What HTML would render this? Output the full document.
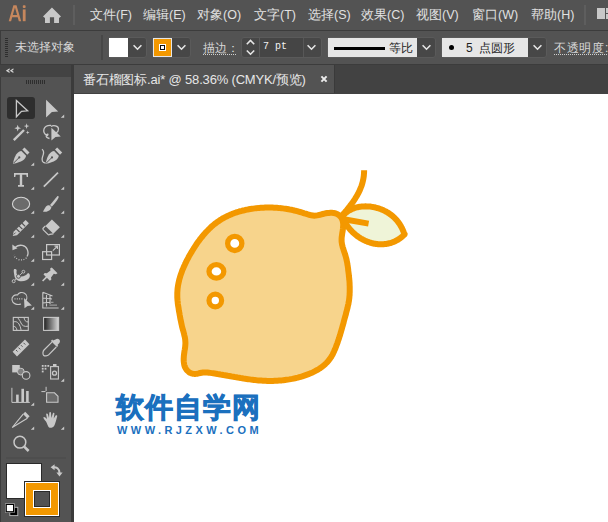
<!DOCTYPE html>
<html><head><meta charset="utf-8">
<style>
*{margin:0;padding:0;box-sizing:border-box}
html,body{width:608px;height:522px;overflow:hidden;background:#535353;font-family:"Liberation Sans",sans-serif;color:#dcdcdc}
.a{position:absolute}
.menu{position:absolute;top:6.5px;font-size:12.5px;color:#e1e1e1;letter-spacing:0px;white-space:nowrap;line-height:16px}
.dd{position:absolute;top:37px;height:21px;background:#474747;border:1px solid #5a5a5a;border-radius:3px}
.ctl{position:absolute;font-size:12px;color:#d8d8d8;white-space:nowrap;line-height:14px}
</style></head><body>
<!-- menu bar -->
<div class="a" style="left:0;top:30px;width:608px;height:1px;background:#3c3c3c"></div>
<svg class="a" style="left:0;top:0" width="70" height="30" viewBox="0 0 70 30">
<path fill-rule="evenodd" fill="#c6875d" d="M8.7,21.2 L13.4,5.2 L16.5,5.2 L21.2,21.2 L18.8,21.2 L17.7,17.3 L12.2,17.3 L11.1,21.2 Z M12.8,15.1 L17.1,15.1 L14.95,7.4 Z"/>
<rect x="22.8" y="9.4" width="2.8" height="11.8" fill="#c6875d"/>
<rect x="22.8" y="5.3" width="2.8" height="2.8" rx="0.8" fill="#c6875d"/>
<path fill="#c8c8c8" d="M51.95,7.6 L61,16.4 L59,18 L59,22.9 L54.1,22.9 L54.1,17.2 L49.9,17.2 L49.9,22.9 L45,22.9 L45,18 L43,16.4 Z"/>
</svg>
<div class="a" style="left:73px;top:5px;width:2px;height:20px;background:#5e5e5e"></div>
<div class="menu" style="left:90px">文件(F)</div>
<div class="menu" style="left:143px">编辑(E)</div>
<div class="menu" style="left:197px">对象(O)</div>
<div class="menu" style="left:254px">文字(T)</div>
<div class="menu" style="left:308px">选择(S)</div>
<div class="menu" style="left:361px">效果(C)</div>
<div class="menu" style="left:416px">视图(V)</div>
<div class="menu" style="left:472px">窗口(W)</div>
<div class="menu" style="left:531px">帮助(H)</div>
<div class="a" style="left:584px;top:5px;width:2px;height:20px;background:#5e5e5e"></div>
<div class="a" style="left:597px;top:8px;width:8px;height:11px;background:#c8c8c8"></div>
<div class="a" style="left:606px;top:8px;width:3px;height:5px;background:#c8c8c8"></div>
<div class="a" style="left:606px;top:14px;width:3px;height:5px;background:#c8c8c8"></div>

<!-- control bar -->
<div class="a" style="left:0;top:31px;width:1px;height:33px;background:#3c3c3c"></div>
<div class="a" style="left:0;top:64px;width:608px;height:1px;background:#3c3c3c"></div>
<div class="a" style="left:5px;top:38px;width:3px;height:20px;background:repeating-linear-gradient(#2e2e2e 0 1px,transparent 1px 2px)"></div>
<div class="ctl" style="left:15px;top:40px">未选择对象</div>
<div class="a" style="left:101px;top:35px;width:2px;height:25px;background:#474747"></div>
<div class="dd" style="left:108px;width:39px"></div>
<div class="a" style="left:109px;top:38px;width:19px;height:19px;background:#fff"></div>
<div class="dd" style="left:152px;width:39px"></div>
<div class="a" style="left:153px;top:38px;width:19px;height:19px;background:#f39800;border:1px solid #e6e6e6"></div>
<div class="a" style="left:159px;top:44px;width:7px;height:7px;background:#fff;border:1px solid #fff"></div>
<div class="a" style="left:160px;top:45px;width:5px;height:5px;background:#fff;border:1px solid #111"></div>
<div class="ctl" style="left:203px;top:41px">描边：</div>
<div class="a" style="left:203px;top:54px;width:33px;height:1px;background:repeating-linear-gradient(90deg,#cfcfcf 0 1px,transparent 1px 2px)"></div>
<div class="dd" style="left:241px;width:81px"></div>
<div class="a" style="left:259px;top:38px;width:1px;height:19px;background:#5c5c5c"></div>
<div class="a" style="left:260px;top:38px;width:43px;height:19px;background:#454545"></div>
<div class="a" style="left:303px;top:38px;width:1px;height:19px;background:#575757"></div>
<div class="ctl" style="left:263px;top:40px;font-family:'Liberation Mono',monospace;font-size:10px;color:#f2f2f2">7 pt</div>
<div class="dd" style="left:327px;width:109px"></div>
<div class="a" style="left:328px;top:38px;width:89px;height:19px;background:#e6e6e6"></div>
<div class="a" style="left:334px;top:47px;width:51px;height:3px;background:#000"></div>
<div class="ctl" style="left:389px;top:41px;color:#1e1e1e">等比</div>
<div class="dd" style="left:441px;width:106px"></div>
<div class="a" style="left:442px;top:38px;width:86px;height:19px;background:#e6e6e6"></div>
<div class="a" style="left:449px;top:45px;width:5px;height:5px;border-radius:50%;background:#000"></div>
<div class="ctl" style="left:466px;top:41px;color:#1e1e1e">5&nbsp; 点圆形</div>
<svg class="a" style="left:0;top:31px" width="608" height="33" viewBox="0 31 608 33">
<g fill="none" stroke="#e6e6e6" stroke-width="1.6">
<path d="M133.6,45.3 L137.5,49.2 L141.4,45.3"/>
<path d="M177.6,45.3 L181.5,49.2 L185.4,45.3"/>
<path d="M307.6,45.3 L311.5,49.2 L315.4,45.3"/>
<path d="M422.6,45.3 L426.5,49.2 L430.4,45.3"/>
<path d="M533.6,45.3 L537.5,49.2 L541.4,45.3"/>
<path d="M246.8,44.2 L250.5,40.5 L254.2,44.2"/>
<path d="M246.8,50.5 L250.5,54.2 L254.2,50.5"/>
</g>
</svg>
<div class="ctl" style="left:554px;top:41px;letter-spacing:0.7px">不透明度</div><div class="ctl" style="left:605px;top:41px">:</div>
<div class="a" style="left:554px;top:54px;width:54px;height:1px;background:repeating-linear-gradient(90deg,#cfcfcf 0 1px,transparent 1px 2px)"></div>

<!-- tab bar -->
<div class="a" style="left:0;top:65px;width:72px;height:12px;background:#434343"></div>
<svg class="a" style="left:0;top:65px" width="20" height="12" viewBox="0 65 20 12"><path d="M5.8,70.7 L9.6,68.3 L9.6,69.9 L8,70.7 L9.6,71.5 L9.6,73.1 Z M9.8,70.7 L13.4,68.3 L13.4,69.9 L11.8,70.7 L13.4,71.5 L13.4,73.1 Z" fill="#d4d4d4"/></svg>
<div class="a" style="left:72px;top:65px;width:536px;height:29px;background:#424242"></div>
<div class="a" style="left:74px;top:65px;width:260px;height:28px;background:#535353"></div>
<div class="ctl" style="left:83px;top:73px;font-size:13px;color:#e6e6e6;letter-spacing:-0.18px">番石榴图标.ai* @ 58.36% (CMYK/预览)</div>
<div class="a" style="left:334px;top:65px;width:1px;height:28px;background:#3a3a3a"></div>
<svg class="a" style="left:318px;top:73px" width="12" height="12" viewBox="0 0 12 12"><path d="M3.4,3.4 L8.6,8.6 M8.6,3.4 L3.4,8.6" stroke="#ececec" stroke-width="2"/></svg>

<!-- toolbar -->
<div class="a" style="left:0;top:77px;width:1px;height:445px;background:#3c3c3c"></div>
<div class="a" style="left:26px;top:80px;width:19px;height:4px;background:repeating-linear-gradient(90deg,#2e2e2e 0 1px,transparent 1px 2px)"></div>
<div class="a" style="left:71px;top:65px;width:3px;height:457px;background:#3b3b3b"></div>

<svg class="a" style="left:0;top:77px" width="71" height="445" viewBox="0 77 71 445">
<rect x="7" y="97" width="28" height="22" rx="3" fill="#2e2e2e"/>
<g fill="#c8c8c8" stroke="none">
<path d="M30.800000000000004,165.8 L34.2,165.8 L34.2,162.4 Z"/><path d="M30.800000000000004,189.8 L34.2,189.8 L34.2,186.4 Z"/><path d="M30.800000000000004,213.8 L34.2,213.8 L34.2,210.4 Z"/><path d="M30.800000000000004,237.8 L34.2,237.8 L34.2,234.4 Z"/><path d="M30.800000000000004,261.8 L34.2,261.8 L34.2,258.40000000000003 Z"/><path d="M30.800000000000004,285.8 L34.2,285.8 L34.2,282.40000000000003 Z"/><path d="M30.800000000000004,309.8 L34.2,309.8 L34.2,306.40000000000003 Z"/><path d="M30.800000000000004,429.8 L34.2,429.8 L34.2,426.40000000000003 Z"/><path d="M30.800000000000004,405.8 L34.2,405.8 L34.2,402.40000000000003 Z"/><path d="M60.800000000000004,117.8 L64.2,117.8 L64.2,114.39999999999999 Z"/><path d="M60.800000000000004,189.8 L64.2,189.8 L64.2,186.4 Z"/><path d="M60.800000000000004,213.8 L64.2,213.8 L64.2,210.4 Z"/><path d="M60.800000000000004,237.8 L64.2,237.8 L64.2,234.4 Z"/><path d="M60.800000000000004,261.8 L64.2,261.8 L64.2,258.40000000000003 Z"/><path d="M60.800000000000004,285.8 L64.2,285.8 L64.2,282.40000000000003 Z"/><path d="M60.800000000000004,309.8 L64.2,309.8 L64.2,306.40000000000003 Z"/><path d="M60.800000000000004,381.8 L64.2,381.8 L64.2,378.40000000000003 Z"/><path d="M60.800000000000004,429.8 L64.2,429.8 L64.2,426.40000000000003 Z"/>
<!-- direct selection -->
<path d="M46.1,99.8 L58.2,111.4 L51.9,111.9 L46.1,117.4 Z"/>
<!-- wand stars -->
<path d="M17.7,124.8 L18.6,127.3 L21.1,128.2 L18.6,129.1 L17.7,131.6 L16.8,129.1 L14.3,128.2 L16.8,127.3 Z"/>
<path d="M26.6,123.3 L27.3,125.4 L29.4,126.1 L27.3,126.8 L26.6,128.9 L25.9,126.8 L23.8,126.1 L25.9,125.4 Z"/>
<path d="M27.7,130.5 L28.2,131.9 L29.6,132.4 L28.2,132.9 L27.7,134.3 L27.2,132.9 L25.8,132.4 L27.2,131.9 Z"/>
<!-- lasso arrow -->
<path d="M51.4,127.7 L60.8,136.6 L55.5,137 L51.4,140.6 Z"/>
<!-- pen nibs -->
<path d="M21.4,151 L26.1,155.7 C25.5,159.5 22,162 12.9,163.8 C14.7,154.7 17.5,151.6 21.4,151 Z"/>
<path d="M22.3,149.6 L24.5,147.5 L29.5,152.5 L27.3,154.7 Z"/>
<path d="M54.1,151 L58.8,155.7 C58.2,159.5 54.7,162 45.6,163.8 C47.4,154.7 50.2,151.6 54.1,151 Z"/>
<path d="M55,149.6 L57.2,147.5 L62.2,152.5 L60,154.7 Z"/>
<!-- T -->
<path d="M14,173 L28,173 L28,177 L26.7,177 L26.3,174.8 L22.2,174.8 L22.2,185 L24,185 L24,186.8 L18,186.8 L18,185 L19.8,185 L19.8,174.8 L15.7,174.8 L15.3,177 L14,177 Z"/>
<!-- brush -->
<path d="M58.2,196 C59.5,197 58.5,199 51.8,206.8 L50,205 C56.5,197.8 57,195.5 58.2,196 Z"/>
<path d="M49.6,205.4 L51.4,207.2 C50.5,211 47,212 43,211.8 C44,210 44.8,208 46,206.6 C47,205.5 48.3,205 49.6,205.4 Z"/>
<!-- pencil striped -->
<path d="M25.6,220 L28.9,223.3 L17,235.2 L12.8,236 L13.6,231.8 Z"/>
<!-- eraser -->
<path d="M51.9,219.4 L59.9,227.2 L53.3,233.8 L45.4,225.9 Z"/>
<!-- rotate arrow head -->
<path d="M12.3,244.5 L17.5,248.3 L12.5,250.2 Z"/>
<!-- pin -->
<path d="M51.8,267.5 L57.5,273.2 L55.8,274.2 L53.8,273.8 L51,277.5 L51.4,279.6 L49.9,280.8 L43.5,274.4 L44.7,272.9 L46.8,273.3 L50.5,270.5 L50.1,268.5 Z"/>
<!-- warp figure -->
<path d="M14,269.3 C15.8,268.2 17.3,269.8 16.5,271.8 C16,273.8 17.5,276 20.2,276.5 C23.2,277 26.2,275.5 28,273 C29.7,273.3 30.3,275 29.6,277.2 C28.2,280.2 24,281.6 20.2,281.2 C17,280.8 14.6,278.3 14.3,275.2 C14.1,273.2 13.3,271 14,269.3 Z"/>
<!-- shape builder arrow -->
<path d="M24,298.1 L31.9,305.6 L27.5,306 L24.5,308.3 Z"/>
<!-- ruler -->
<path d="M12.6,351.8 L25,339.6 L29.4,344.2 L17,356.4 Z"/>
<!-- eyedropper bulb -->
<path d="M55.5,339.6 C56.5,338.6 58.3,338.6 59.2,339.6 C60.2,340.6 60.2,342.2 59.2,343.2 L57.5,344.9 L58.3,345.8 L57,347 L50.9,340.9 L52.2,339.6 L53,340.4 Z"/>
<!-- blend -->
<rect x="12.2" y="365" width="7.6" height="7.4"/>
<!-- graph bars -->
<rect x="16.1" y="394.6" width="2.6" height="7.4"/>
<rect x="21.4" y="388.8" width="2.6" height="13.2"/>
<rect x="26.1" y="391" width="2.6" height="11"/>
<!-- symbol spray dots -->
<rect x="41.8" y="365" width="1.8" height="1.8"/><rect x="44.6" y="365" width="1.8" height="1.8"/><rect x="47.4" y="365" width="1.8" height="1.8"/>
<rect x="41.8" y="367.8" width="1.8" height="1.8"/><rect x="44.6" y="367.8" width="1.8" height="1.8"/>
<rect x="41.8" y="370.6" width="1.8" height="1.8"/>
<rect x="53" y="364" width="3.5" height="2"/>
<!-- slice cap -->
<path d="M25.2,411.8 L29.6,416.2 L27.4,418.4 L23,414 Z"/>
<!-- hand -->
<path d="M46,421.5 C44.5,419.5 43,418 43.5,417.2 C44.2,416.5 45.5,417.5 47,419 L46.2,414.5 C46,413.5 47.5,413.2 47.9,414.3 L49,418 L49.3,412.7 C49.4,411.7 51,411.7 51,412.7 L51.4,418 L52.8,413.4 C53.1,412.4 54.6,412.8 54.4,413.8 L53.7,418.5 L55.6,415.6 C56.1,414.8 57.6,415.3 57.2,416.3 C56.5,419 55.5,423 54.5,425.2 C53.5,427.3 51.5,428 49.8,427.8 C48,427.5 47,423 46,421.5 Z"/>
</g>
<g fill="none" stroke="#c8c8c8" stroke-width="1.3">
<!-- selection outline -->
<path d="M16.4,100.5 L27.6,110.8 L21.5,111.3 L16.4,116.8 Z" stroke-linejoin="miter"/>
<!-- wand stick -->
<path d="M13.8,140.2 L24,130" stroke-width="2.4"/>
<!-- lasso loop -->
<path d="M51,126.5 C53,125 58.5,125.5 58.5,129 C58.5,131.5 57,132.5 56,133 M49.5,138.5 C47,138 45.5,137 46.5,135 C47.5,133.5 48.5,134 47.5,135.5 C44,135 43.3,131 44,129 C45,126.5 48,125.3 51,125.5"/>
<path d="M13.5,163.2 L19,157.7 M46.2,163.2 L51.7,157.7" stroke="#535353" stroke-width="1"/><circle cx="19.3" cy="157.4" r="1.1" fill="#535353" stroke="none"/><circle cx="52" cy="157.4" r="1.1" fill="#535353" stroke="none"/>
<!-- squiggle -->
<path d="M42,149.3 C44.5,151 43.8,154 42.5,157 C41.3,160.5 42.5,163 45.5,163"/>
<!-- line tool -->
<path d="M43.8,186.6 L58,172.6" stroke-width="1.7"/>
<!-- ellipse -->
<ellipse cx="21.05" cy="203.9" rx="8.6" ry="6.6" fill="#6b6b6b" stroke="#d4d4d4" stroke-width="1.1"/>
<path d="M16.2,228.6 L19.6,232 M19,225.8 L22.4,229.2 M21.8,223 L25.2,226.4" stroke="#535353" stroke-width="1.2"/><path d="M13.6,234.6 L15.6,232.6" stroke="#535353" stroke-width="0.9"/>
<!-- eraser bottom -->
<path d="M45.4,225.9 L43.3,228 C42.8,228.5 42.8,229.3 43.3,229.8 L47.9,234.4 C48.4,234.9 49.2,234.9 49.7,234.4 L53.3,233.8" stroke-width="1.2"/>
<!-- rotate arc -->
<path d="M15.5,247 C19.5,244 25.5,245 27.3,249.5 C28.5,252.5 28,255 27,256.5"/>
<path d="M26.5,257.8 C24,260 21,260.3 18.5,259.5 C16,258.5 14.5,257 13.8,255" stroke-dasharray="0.9 1.6"/>
<!-- scale squares -->
<rect x="42.6" y="251.7" width="9" height="7.8" stroke-width="1.2"/>
<rect x="46.6" y="244.6" width="12.8" height="10.4" stroke-width="1.2"/>
<path d="M52.9,250.6 L57.2,246.3 M54.5,246.2 L57.4,246.2 L57.4,249.1" stroke-width="1.2"/>
<!-- pin needle -->
<path d="M47,276.6 L42.6,281" stroke-width="1.6"/>
<!-- warp circles -->
<path d="M14.5,280.3 L22.6,272.5" stroke="#c8c8c8" stroke-width="0.9"/><circle cx="13.7" cy="281.2" r="1.5" fill="#535353" stroke-width="0.9"/><circle cx="23.4" cy="271.7" r="1.4" fill="#535353" stroke-width="0.9"/><circle cx="18.5" cy="276.3" r="2" fill="#c8c8c8" stroke="#535353" stroke-width="0.9"/>
<!-- shape builder circles -->
<path d="M21,304 C17,305.5 12.5,303.5 12,300 C11.5,296.5 14.5,294.5 17.5,295 C18.5,292.5 22,291.8 24.5,293.2 C27,294.8 27.5,298 26,300.5" stroke-width="1.1"/>
<path d="M14.5,298.8 L23.5,298.8" stroke-dasharray="1 1.3" stroke-width="1.3"/>
<!-- perspective grid -->
<path d="M42.8,292.2 L42.8,308 L58.6,308 M42.8,292.2 L52.5,296 M42.8,292.2 L42.8,308 M46.5,293.6 L46.5,306.5 M50,295 L50,304 M42.8,298 L52,299 M42.8,303 L50,302.3" stroke-width="1.1"/>
<path d="M49.5,305.2 L57,305.2 M50.5,302.4 L53.5,302.4" stroke="#9a9a9a" stroke-width="1.2"/>
<!-- mesh -->
<rect x="13.3" y="317.4" width="15" height="13" stroke-width="1.1"/>
<path d="M13.3,322 C16,321 18,322 19.5,325 C20.5,327 21,329 21,330.4 M17.5,317.4 C19,319.5 20.5,321.5 21,323 C22,325.5 24,327 28.3,326.2 M24,317.4 C24.5,320 25.2,322 28.3,322 M13.3,326.5 C15.5,326 16.5,328 17,330.4" stroke-width="1"/>
<!-- gradient -->
<rect x="43.6" y="317.4" width="15" height="13" fill="url(#grad)" stroke-width="1.1"/>
<!-- ruler ticks -->
<path d="M16,350 L17.5,351.5 M18.5,347.6 L20.3,349.4 M21,345.2 L22.5,346.7 M23.5,342.8 L25.3,344.6" stroke="#535353" stroke-width="1"/>
<!-- eyedropper tube -->
<path d="M51.9,342.1 L44,350 C42.8,351.3 42.6,354 43.5,355.2 C44.7,356.3 47.4,356 48.6,354.8 L56.3,347" stroke-width="1.2"/>
<!-- blend circles -->
<circle cx="20.8" cy="371.6" r="3.4" fill="#808080" stroke="#c8c8c8" stroke-width="1"/>
<circle cx="26.1" cy="375.4" r="3.8" fill="#535353" stroke-width="1.1"/>
<!-- symbol can -->
<rect x="50.6" y="366.6" width="7.8" height="12.4" stroke-width="1.1"/>
<circle cx="54.5" cy="373.2" r="2" stroke-width="1.3"/>
<!-- graph axis -->
<path d="M11.9,387.8 L11.9,402.4 L29.8,402.4" stroke-width="1"/>
<!-- artboard -->
<path d="M46.1,386.8 L46.1,391 M41.4,391.6 L45.5,391.6" stroke-width="1"/>
<path d="M46.6,392.8 L54.5,392.8 L58,396.3 L58,402.2 L46.6,402.2 Z" fill="#6b6b6b" stroke-width="1.1"/>
<!-- slice blade -->
<path d="M23.2,414.2 L12.2,427.5 L27.4,418.2" stroke-width="1.1"/>
<!-- zoom -->
<circle cx="19.9" cy="442.2" r="5.9" stroke-width="1.5"/>
<path d="M24.2,446.6 L28.6,451" stroke-width="2.6"/>
<!-- swap arrows -->
<path d="M53,467.2 C56.5,466.8 59.3,468.5 59.5,473" stroke-width="2"/>
</g>
<path d="M50.6,467.2 L54.6,464.2 L54.6,470.2 Z M59.5,476.6 L56.4,472.4 L62.6,472.4 Z" fill="#c8c8c8"/>
<defs><linearGradient id="grad" x1="0" x2="1"><stop offset="0" stop-color="#1e1e1e"/><stop offset="1" stop-color="#d8d8d8"/></linearGradient></defs>
<!-- separator -->
<rect x="6" y="457.5" width="60" height="1" fill="#4b4b4b"/>
<!-- fill swatch -->
<rect x="6.5" y="463.5" width="35" height="35" fill="#fff" stroke="#2a2a2a" stroke-width="1"/>
<!-- stroke swatch -->
<rect x="24.5" y="481.5" width="35" height="35" fill="#f39800" stroke="#2a2a2a" stroke-width="1"/>
<rect x="25.5" y="482.5" width="33" height="33" fill="none" stroke="#fff" stroke-width="1"/>
<rect x="33" y="490" width="18" height="18" fill="#fff"/>
<rect x="34.5" y="491.5" width="15" height="15" fill="#525252" stroke="#2a2a2a" stroke-width="1"/>
<!-- default fill/stroke -->
<rect x="9.8" y="507.3" width="8" height="8.3" fill="#000" stroke="#b8b8b8" stroke-width="0.9"/>
<rect x="5.4" y="503.6" width="9" height="9" fill="none" stroke="#9a9a9a" stroke-width="0.8"/>
<rect x="6.3" y="504.5" width="7.2" height="7.2" fill="#fff" stroke="#000" stroke-width="1"/>
</svg>
<!-- canvas -->
<div class="a" style="left:74px;top:94px;width:534px;height:428px;background:#fff"></div>
<svg class="a" style="left:0;top:0" width="608" height="522" viewBox="0 0 608 522">
<g fill="none" stroke="#f39800" stroke-width="6" stroke-linejoin="round">
<path id="body" d="M259.2,207.9 L260.7,207.8 L262.2,207.7 L263.7,207.7 L265.1,207.6 L266.6,207.6 L268.1,207.6 L269.6,207.6 L271.0,207.6 L272.5,207.6 L274.0,207.7 L275.4,207.7 L276.9,207.8 L278.4,207.9 L279.8,208.1 L281.3,208.2 L282.8,208.4 L284.2,208.6 L285.7,208.8 L287.1,209.0 L288.6,209.3 L290.0,209.6 L291.5,209.8 L292.9,210.1 L294.4,210.5 L295.8,210.8 L297.2,211.2 L298.6,211.6 L300.1,212.0 L301.5,212.4 L302.9,212.8 L304.3,213.3 L305.7,213.7 L307.2,214.2 L308.6,214.6 L310.0,215.0 L311.5,215.3 L312.9,215.6 L314.3,215.7 L315.7,215.6 L317.1,215.4 L318.5,215.1 L319.9,214.8 L321.4,214.4 L322.8,214.0 L324.3,213.6 L325.8,213.3 L327.4,213.0 L328.9,212.9 L330.4,212.8 L331.9,212.8 L333.4,212.9 L334.8,213.2 L336.2,213.6 L337.5,214.2 L338.7,215.0 L339.8,215.9 L340.8,217.0 L341.6,218.3 L342.3,219.6 L342.7,220.9 L343.0,222.3 L343.2,223.8 L343.2,225.3 L343.1,226.8 L343.0,228.3 L342.8,229.8 L342.6,231.3 L342.3,232.8 L342.1,234.3 L341.9,235.8 L341.7,237.2 L341.6,238.6 L341.6,240.1 L341.6,241.5 L341.8,242.9 L342.0,244.4 L342.4,245.8 L342.7,247.2 L343.2,248.6 L343.6,250.1 L344.1,251.5 L344.6,252.9 L345.0,254.3 L345.5,255.8 L345.9,257.2 L346.3,258.6 L346.6,260.0 L346.9,261.5 L347.2,262.9 L347.4,264.4 L347.7,265.8 L347.9,267.3 L348.1,268.7 L348.2,270.2 L348.4,271.6 L348.6,273.1 L348.8,274.6 L348.9,276.0 L349.1,277.5 L349.2,279.0 L349.4,280.5 L349.5,281.9 L349.6,283.4 L349.6,284.9 L349.7,286.4 L349.7,287.8 L349.7,289.3 L349.7,290.8 L349.7,292.3 L349.6,293.7 L349.6,295.2 L349.4,296.7 L349.3,298.2 L349.1,299.6 L348.9,301.1 L348.6,302.5 L348.4,304.0 L348.0,305.4 L347.7,306.9 L347.4,308.3 L347.0,309.8 L346.6,311.2 L346.2,312.6 L345.9,314.1 L345.5,315.5 L345.1,316.9 L344.7,318.3 L344.3,319.8 L343.9,321.2 L343.6,322.6 L343.2,324.0 L342.8,325.4 L342.4,326.8 L342.0,328.2 L341.6,329.6 L341.2,331.0 L340.8,332.4 L340.4,333.8 L340.0,335.2 L339.5,336.6 L339.1,338.0 L338.6,339.4 L338.1,340.8 L337.7,342.2 L337.2,343.6 L336.6,345.0 L336.1,346.4 L335.6,347.8 L335.0,349.3 L334.4,350.6 L333.8,352.0 L333.1,353.4 L332.5,354.7 L331.7,356.0 L331.0,357.3 L330.1,358.5 L329.3,359.7 L328.4,360.8 L327.4,361.9 L326.4,363.0 L325.4,364.0 L324.3,365.0 L323.2,365.9 L322.0,366.8 L320.9,367.6 L319.7,368.5 L318.4,369.3 L317.2,370.0 L315.9,370.7 L314.6,371.4 L313.2,372.1 L311.9,372.7 L310.5,373.3 L309.2,373.9 L307.8,374.4 L306.4,374.9 L305.0,375.4 L303.6,375.9 L302.2,376.4 L300.7,376.8 L299.3,377.2 L297.9,377.6 L296.5,377.9 L295.0,378.3 L293.6,378.6 L292.1,378.9 L290.7,379.1 L289.2,379.4 L287.8,379.6 L286.3,379.8 L284.9,380.0 L283.4,380.2 L281.9,380.4 L280.5,380.5 L279.0,380.6 L277.5,380.7 L276.1,380.8 L274.6,380.8 L273.1,380.9 L271.6,380.9 L270.2,380.9 L268.7,380.9 L267.2,380.9 L265.7,380.8 L264.3,380.8 L262.8,380.7 L261.3,380.6 L259.8,380.5 L258.4,380.4 L256.9,380.3 L255.4,380.1 L254.0,380.0 L252.5,379.8 L251.0,379.6 L249.6,379.4 L248.1,379.2 L246.6,379.0 L245.2,378.8 L243.7,378.6 L242.3,378.3 L240.8,378.1 L239.4,377.8 L237.9,377.6 L236.5,377.3 L235.0,377.1 L233.6,376.8 L232.1,376.6 L230.6,376.3 L229.2,376.0 L227.7,375.8 L226.3,375.5 L224.8,375.2 L223.4,375.0 L221.9,374.7 L220.5,374.5 L219.0,374.2 L217.6,374.0 L216.1,373.7 L214.7,373.5 L213.2,373.3 L211.8,373.1 L210.3,372.9 L208.9,372.7 L207.4,372.5 L206.0,372.4 L204.5,372.4 L203.0,372.5 L201.6,372.7 L200.1,373.0 L198.6,373.4 L197.1,373.7 L195.6,373.9 L194.2,373.9 L192.7,373.7 L191.3,373.3 L189.9,372.7 L188.7,371.9 L187.6,370.9 L186.6,369.9 L185.8,368.7 L185.1,367.4 L184.6,366.1 L184.2,364.7 L184.0,363.3 L183.8,361.8 L183.7,360.2 L183.7,358.7 L183.8,357.1 L183.9,355.5 L184.1,354.0 L184.3,352.5 L184.5,351.0 L184.8,349.5 L185.0,348.1 L185.2,346.6 L185.3,345.2 L185.4,343.8 L185.4,342.4 L185.3,341.0 L185.2,339.6 L185.0,338.1 L184.7,336.7 L184.3,335.2 L184.0,333.7 L183.6,332.3 L183.2,330.8 L182.8,329.4 L182.4,327.9 L182.0,326.5 L181.7,325.0 L181.4,323.6 L181.1,322.2 L180.8,320.7 L180.5,319.3 L180.2,317.9 L180.0,316.5 L179.7,315.0 L179.5,313.6 L179.2,312.1 L178.9,310.7 L178.7,309.2 L178.5,307.7 L178.2,306.2 L178.0,304.8 L177.8,303.3 L177.7,301.8 L177.5,300.3 L177.4,298.8 L177.3,297.3 L177.3,295.8 L177.3,294.4 L177.3,292.9 L177.4,291.4 L177.5,290.0 L177.6,288.5 L177.8,287.1 L178.0,285.6 L178.3,284.2 L178.6,282.7 L178.9,281.3 L179.2,279.9 L179.6,278.5 L180.0,277.1 L180.4,275.7 L180.9,274.3 L181.4,272.9 L181.9,271.5 L182.4,270.1 L183.0,268.8 L183.6,267.4 L184.2,266.0 L184.8,264.7 L185.4,263.3 L186.1,262.0 L186.7,260.7 L187.4,259.4 L188.1,258.1 L188.8,256.7 L189.5,255.4 L190.3,254.2 L191.0,252.9 L191.8,251.6 L192.5,250.3 L193.3,249.1 L194.1,247.8 L194.9,246.6 L195.7,245.4 L196.5,244.1 L197.3,242.9 L198.2,241.7 L199.1,240.6 L199.9,239.4 L200.8,238.2 L201.8,237.1 L202.7,235.9 L203.6,234.8 L204.6,233.7 L205.6,232.6 L206.6,231.5 L207.6,230.5 L208.6,229.4 L209.7,228.4 L210.8,227.3 L211.9,226.3 L213.0,225.4 L214.1,224.4 L215.3,223.5 L216.5,222.6 L217.7,221.7 L218.9,220.9 L220.1,220.1 L221.4,219.3 L222.6,218.5 L223.9,217.8 L225.2,217.1 L226.5,216.5 L227.8,215.8 L229.2,215.2 L230.5,214.6 L231.9,214.1 L233.3,213.5 L234.6,213.0 L236.0,212.5 L237.4,212.1 L238.8,211.7 L240.3,211.2 L241.7,210.9 L243.1,210.5 L244.6,210.2 L246.0,209.8 L247.5,209.6 L248.9,209.3 L250.4,209.0 L251.9,208.8 L253.3,208.6 L254.8,208.4 L256.3,208.2 L257.8,208.1 L259.2,207.9Z" fill="#f7d48c"/>
<path id="leaf" d="M342.2,216.8 L342.8,216.0 L343.5,215.2 L344.1,214.5 L344.8,213.8 L345.6,213.1 L346.3,212.5 L347.1,211.9 L347.9,211.3 L348.7,210.8 L349.5,210.3 L350.4,209.9 L351.2,209.4 L352.1,209.0 L353.0,208.6 L353.9,208.3 L354.8,208.0 L355.7,207.7 L356.7,207.4 L357.6,207.2 L358.6,207.0 L359.6,206.8 L360.6,206.7 L361.5,206.6 L362.5,206.5 L363.5,206.4 L364.5,206.4 L365.5,206.3 L366.5,206.4 L367.5,206.4 L368.5,206.5 L369.6,206.5 L370.6,206.6 L371.6,206.8 L372.6,206.9 L373.5,207.1 L374.5,207.3 L375.5,207.5 L376.5,207.8 L377.4,208.1 L378.4,208.3 L379.4,208.7 L380.3,209.0 L381.2,209.3 L382.1,209.7 L383.0,210.1 L383.9,210.5 L384.8,211.0 L385.7,211.4 L386.5,211.9 L387.4,212.4 L388.2,212.9 L389.0,213.4 L389.8,214.0 L390.6,214.6 L391.4,215.1 L392.2,215.8 L392.9,216.4 L393.6,217.0 L394.3,217.7 L395.0,218.4 L395.7,219.1 L396.4,219.8 L397.0,220.5 L397.6,221.3 L398.2,222.1 L398.8,222.9 L399.4,223.7 L399.9,224.5 L400.4,225.3 L400.9,226.2 L401.4,227.1 L401.9,228.0 L402.3,228.9 L402.7,229.8 L403.1,230.7 L403.5,231.7 L403.8,232.7 L404.1,233.7 L404.4,234.7 L404.6,234.3 L403.9,235.1 L403.1,235.8 L402.3,236.5 L401.5,237.2 L400.7,237.8 L399.8,238.4 L399.0,239.0 L398.1,239.6 L397.3,240.1 L396.4,240.5 L395.6,241.0 L394.7,241.4 L393.8,241.8 L392.9,242.2 L392.0,242.5 L391.1,242.8 L390.2,243.1 L389.3,243.3 L388.3,243.5 L387.4,243.7 L386.5,243.9 L385.6,244.0 L384.6,244.1 L383.7,244.2 L382.8,244.3 L381.8,244.3 L380.9,244.3 L380.0,244.3 L379.0,244.2 L378.1,244.2 L377.2,244.1 L376.2,244.0 L375.3,243.8 L374.4,243.7 L373.4,243.5 L372.5,243.3 L371.6,243.0 L370.7,242.8 L369.8,242.5 L368.9,242.2 L368.0,241.9 L367.1,241.5 L366.2,241.2 L365.3,240.8 L364.5,240.4 L363.6,239.9 L362.7,239.5 L361.9,239.0 L361.1,238.6 L360.2,238.1 L359.4,237.5 L358.6,237.0 L357.8,236.4 L357.0,235.9 L356.3,235.3 L355.5,234.7 L354.8,234.0 L354.0,233.4 L353.3,232.8 L352.6,232.1 L351.9,231.4 L351.2,230.7 L350.6,230.0 L349.9,229.2 L349.3,228.5 L348.7,227.7 L348.1,227.0 L347.5,226.2 L347.0,225.4 L346.4,224.6 L345.9,223.7 L345.4,222.9 L344.9,222.0 L344.5,221.2 L344.0,220.3 L343.6,219.4 L343.2,218.5 L342.9,217.6 L342.5,216.7Z" fill="#eff4d8"/>
<path id="stem" d="M364.1,170.3 L364.1,171.8 L364.0,173.2 L363.9,174.6 L363.8,176.0 L363.6,177.3 L363.4,178.7 L363.1,180.0 L362.8,181.4 L362.5,182.7 L362.1,184.0 L361.7,185.3 L361.2,186.6 L360.7,187.8 L360.2,189.1 L359.7,190.4 L359.1,191.6 L358.5,192.8 L357.9,194.0 L357.2,195.2 L356.5,196.4 L355.8,197.6 L355.1,198.8 L354.3,199.9 L353.6,201.1 L352.8,202.2 L352.0,203.3 L351.2,204.4 L350.3,205.5 L349.5,206.6 L348.6,207.7 L347.7,208.8 L346.9,209.9 L346.0,210.9 L345.1,212.0 L344.2,213.0 L343.3,214.0 L342.4,215.0 L341.5,216.0 L340.6,217.1" stroke-linecap="butt"/>
<path d="M342.5,219.0 L368.6,223.6"/>
<circle cx="234.75" cy="243.4" r="7.1" fill="#fff" stroke-width="5.3"/>
<ellipse cx="216.4" cy="271.4" rx="7.4" ry="6.7" fill="#fff" stroke-width="5.3"/>
<circle cx="215.3" cy="300.5" r="6.3" fill="#fff" stroke-width="5.2"/>
</g>
</svg>
<div class="a" style="left:116px;top:392px;font-size:28px;font-weight:bold;color:#1b70be;-webkit-text-stroke:0.8px #1b70be;letter-spacing:1px;white-space:nowrap;line-height:32px">软件自学网</div>
<div class="a" style="left:117px;top:425px;font-size:11px;font-weight:bold;color:#1b70be;white-space:nowrap;letter-spacing:3.45px;line-height:11px">WWW.RJZXW.COM</div>
</body></html>
